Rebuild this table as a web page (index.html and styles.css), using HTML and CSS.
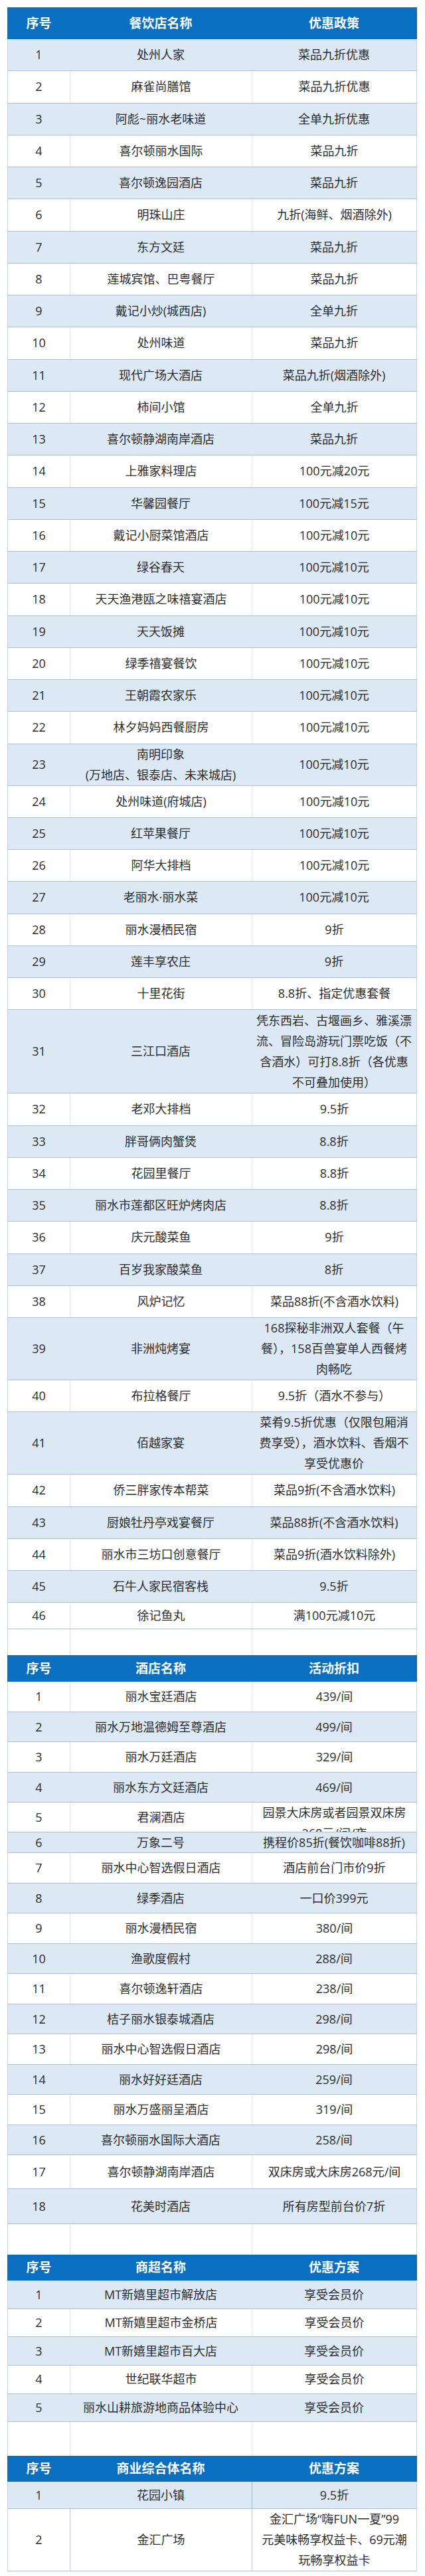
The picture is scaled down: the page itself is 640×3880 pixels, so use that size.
FILE: index.html
```html
<!DOCTYPE html>
<html lang="zh-CN">
<head>
<meta charset="utf-8">
<title>优惠商家名单</title>
<link rel="stylesheet" href="styles.css">
</head>
<body>
<div class="sheet">
  <section class="tbl food">
    <div class="row head"><div class="cell">序号</div><div class="cell">餐饮店名称</div><div class="cell">优惠政策</div></div>
    <div class="row b"><div class="cell">1</div><div class="cell">处州人家</div><div class="cell">菜品九折优惠</div></div>
    <div class="row w"><div class="cell">2</div><div class="cell">麻雀尚膳馆</div><div class="cell">菜品九折优惠</div></div>
    <div class="row b"><div class="cell">3</div><div class="cell">阿彪~丽水老味道</div><div class="cell">全单九折优惠</div></div>
    <div class="row w"><div class="cell">4</div><div class="cell">喜尔顿丽水国际</div><div class="cell">菜品九折</div></div>
    <div class="row b"><div class="cell">5</div><div class="cell">喜尔顿逸园酒店</div><div class="cell">菜品九折</div></div>
    <div class="row w"><div class="cell">6</div><div class="cell">明珠山庄</div><div class="cell">九折(海鲜、烟酒除外)</div></div>
    <div class="row b"><div class="cell">7</div><div class="cell">东方文廷</div><div class="cell">菜品九折</div></div>
    <div class="row w"><div class="cell">8</div><div class="cell">莲城宾馆、巴粤餐厅</div><div class="cell">菜品九折</div></div>
    <div class="row b"><div class="cell">9</div><div class="cell">戴记小炒(城西店)</div><div class="cell">全单九折</div></div>
    <div class="row w"><div class="cell">10</div><div class="cell">处州味道</div><div class="cell">菜品九折</div></div>
    <div class="row b"><div class="cell">11</div><div class="cell">现代广场大酒店</div><div class="cell">菜品九折(烟酒除外)</div></div>
    <div class="row w"><div class="cell">12</div><div class="cell">柿间小馆</div><div class="cell">全单九折</div></div>
    <div class="row b"><div class="cell">13</div><div class="cell">喜尔顿静湖南岸酒店</div><div class="cell">菜品九折</div></div>
    <div class="row w"><div class="cell">14</div><div class="cell">上雅家料理店</div><div class="cell">100元减20元</div></div>
    <div class="row b"><div class="cell">15</div><div class="cell">华馨园餐厅</div><div class="cell">100元减15元</div></div>
    <div class="row w"><div class="cell">16</div><div class="cell">戴记小厨菜馆酒店</div><div class="cell">100元减10元</div></div>
    <div class="row b"><div class="cell">17</div><div class="cell">绿谷春天</div><div class="cell">100元减10元</div></div>
    <div class="row w"><div class="cell">18</div><div class="cell">天天渔港瓯之味禧宴酒店</div><div class="cell">100元减10元</div></div>
    <div class="row b"><div class="cell">19</div><div class="cell">天天饭摊</div><div class="cell">100元减10元</div></div>
    <div class="row w"><div class="cell">20</div><div class="cell">绿季禧宴餐饮</div><div class="cell">100元减10元</div></div>
    <div class="row b"><div class="cell">21</div><div class="cell">王朝霞农家乐</div><div class="cell">100元减10元</div></div>
    <div class="row w"><div class="cell">22</div><div class="cell">林夕妈妈西餐厨房</div><div class="cell">100元减10元</div></div>
    <div class="row b lines2"><div class="cell">23</div><div class="cell"><span class="txt">南明印象</span><span class="txt">(万地店、银泰店、未来城店)</span></div><div class="cell">100元减10元</div></div>
    <div class="row w"><div class="cell">24</div><div class="cell">处州味道(府城店)</div><div class="cell">100元减10元</div></div>
    <div class="row b"><div class="cell">25</div><div class="cell">红苹果餐厅</div><div class="cell">100元减10元</div></div>
    <div class="row w"><div class="cell">26</div><div class="cell">阿华大排档</div><div class="cell">100元减10元</div></div>
    <div class="row b"><div class="cell">27</div><div class="cell">老丽水·丽水菜</div><div class="cell">100元减10元</div></div>
    <div class="row w"><div class="cell">28</div><div class="cell">丽水漫栖民宿</div><div class="cell">9折</div></div>
    <div class="row b"><div class="cell">29</div><div class="cell">莲丰享农庄</div><div class="cell">9折</div></div>
    <div class="row w"><div class="cell">30</div><div class="cell">十里花街</div><div class="cell">8.8折、指定优惠套餐</div></div>
    <div class="row b lines4"><div class="cell">31</div><div class="cell">三江口酒店</div><div class="cell"><span class="txt">凭东西岩、古堰画乡、雅溪漂</span><span class="txt">流、冒险岛游玩门票吃饭（不</span><span class="txt">含酒水）可打8.8折（各优惠</span><span class="txt">不可叠加使用）</span></div></div>
    <div class="row w"><div class="cell">32</div><div class="cell">老邓大排档</div><div class="cell">9.5折</div></div>
    <div class="row b"><div class="cell">33</div><div class="cell">胖哥俩肉蟹煲</div><div class="cell">8.8折</div></div>
    <div class="row w"><div class="cell">34</div><div class="cell">花园里餐厅</div><div class="cell">8.8折</div></div>
    <div class="row b"><div class="cell">35</div><div class="cell">丽水市莲都区旺炉烤肉店</div><div class="cell">8.8折</div></div>
    <div class="row w"><div class="cell">36</div><div class="cell">庆元酸菜鱼</div><div class="cell">9折</div></div>
    <div class="row b"><div class="cell">37</div><div class="cell">百岁我家酸菜鱼</div><div class="cell">8折</div></div>
    <div class="row w"><div class="cell">38</div><div class="cell">风炉记忆</div><div class="cell">菜品88折(不含酒水饮料)</div></div>
    <div class="row b lines3"><div class="cell">39</div><div class="cell">非洲炖烤宴</div><div class="cell"><span class="txt">168探秘非洲双人套餐（午</span><span class="txt">餐），158百兽宴单人西餐烤</span><span class="txt">肉畅吃</span></div></div>
    <div class="row w"><div class="cell">40</div><div class="cell">布拉格餐厅</div><div class="cell">9.5折（酒水不参与）</div></div>
    <div class="row b lines3"><div class="cell">41</div><div class="cell">佰越家宴</div><div class="cell"><span class="txt">菜肴9.5折优惠（仅限包厢消</span><span class="txt">费享受），酒水饮料、香烟不</span><span class="txt">享受优惠价</span></div></div>
    <div class="row w"><div class="cell">42</div><div class="cell">侨三胖家传本帮菜</div><div class="cell">菜品9折(不含酒水饮料)</div></div>
    <div class="row b"><div class="cell">43</div><div class="cell">厨娘牡丹亭戏宴餐厅</div><div class="cell">菜品88折(不含酒水饮料)</div></div>
    <div class="row w"><div class="cell">44</div><div class="cell">丽水市三坊口创意餐厅</div><div class="cell">菜品9折(酒水饮料除外)</div></div>
    <div class="row b"><div class="cell">45</div><div class="cell">石牛人家民宿客栈</div><div class="cell">9.5折</div></div>
    <div class="row w last-short"><div class="cell">46</div><div class="cell">徐记鱼丸</div><div class="cell">满100元减10元</div></div>
  </section>

  <div class="row w spacer gap-a"><div class="cell"></div><div class="cell"></div><div class="cell"></div></div>

  <section class="tbl hotel">
    <div class="row head"><div class="cell">序号</div><div class="cell">酒店名称</div><div class="cell">活动折扣</div></div>
    <div class="row w"><div class="cell">1</div><div class="cell">丽水宝廷酒店</div><div class="cell">439/间</div></div>
    <div class="row b"><div class="cell">2</div><div class="cell">丽水万地温德姆至尊酒店</div><div class="cell">499/间</div></div>
    <div class="row w"><div class="cell">3</div><div class="cell">丽水万廷酒店</div><div class="cell">329/间</div></div>
    <div class="row b"><div class="cell">4</div><div class="cell">丽水东方文廷酒店</div><div class="cell">469/间</div></div>
    <div class="row w row-clip"><div class="cell">5</div><div class="cell">君澜酒店</div><div class="cell clip"><span class="txt">园景大床房或者园景双床房</span><span class="txt">268元/间/夜</span></div></div>
    <div class="row b row-thin"><div class="cell">6</div><div class="cell">万象二号</div><div class="cell">携程价85折(餐饮咖啡88折)</div></div>
    <div class="row w"><div class="cell">7</div><div class="cell">丽水中心智选假日酒店</div><div class="cell">酒店前台门市价9折</div></div>
    <div class="row b"><div class="cell">8</div><div class="cell">绿季酒店</div><div class="cell">一口价399元</div></div>
    <div class="row w"><div class="cell">9</div><div class="cell">丽水漫栖民宿</div><div class="cell">380/间</div></div>
    <div class="row b"><div class="cell">10</div><div class="cell">渔歌度假村</div><div class="cell">288/间</div></div>
    <div class="row w"><div class="cell">11</div><div class="cell">喜尔顿逸轩酒店</div><div class="cell">238/间</div></div>
    <div class="row b"><div class="cell">12</div><div class="cell">桔子丽水银泰城酒店</div><div class="cell">298/间</div></div>
    <div class="row w"><div class="cell">13</div><div class="cell">丽水中心智选假日酒店</div><div class="cell">298/间</div></div>
    <div class="row b"><div class="cell">14</div><div class="cell">丽水好好廷酒店</div><div class="cell">259/间</div></div>
    <div class="row w"><div class="cell">15</div><div class="cell">丽水万盛丽呈酒店</div><div class="cell">319/间</div></div>
    <div class="row b"><div class="cell">16</div><div class="cell">喜尔顿丽水国际大酒店</div><div class="cell">258/间</div></div>
    <div class="row w row-51"><div class="cell">17</div><div class="cell">喜尔顿静湖南岸酒店</div><div class="cell">双床房或大床房268元/间</div></div>
    <div class="row b row-53"><div class="cell">18</div><div class="cell">花美时酒店</div><div class="cell">所有房型前台价7折</div></div>
  </section>

  <div class="row w spacer gap-b"><div class="cell"></div><div class="cell"></div><div class="cell"></div></div>

  <section class="tbl market">
    <div class="row head"><div class="cell">序号</div><div class="cell">商超名称</div><div class="cell">优惠方案</div></div>
    <div class="row b"><div class="cell">1</div><div class="cell">MT新嬉里超市解放店</div><div class="cell">享受会员价</div></div>
    <div class="row w"><div class="cell">2</div><div class="cell">MT新嬉里超市金桥店</div><div class="cell">享受会员价</div></div>
    <div class="row b"><div class="cell">3</div><div class="cell">MT新嬉里超市百大店</div><div class="cell">享受会员价</div></div>
    <div class="row w"><div class="cell">4</div><div class="cell">世纪联华超市</div><div class="cell">享受会员价</div></div>
    <div class="row b"><div class="cell">5</div><div class="cell">丽水山耕旅游地商品体验中心</div><div class="cell">享受会员价</div></div>
  </section>

  <div class="row w spacer gap-c"><div class="cell"></div><div class="cell"></div><div class="cell"></div></div>

  <section class="tbl mall">
    <div class="row head"><div class="cell">序号</div><div class="cell">商业综合体名称</div><div class="cell">优惠方案</div></div>
    <div class="row b divided"><div class="cell">1</div><div class="cell">花园小镇</div><div class="cell">9.5折</div></div>
    <div class="row w strong-lines lines3"><div class="cell">2</div><div class="cell">金汇广场</div><div class="cell"><span class="txt">金汇广场“嗨FUN一夏”99</span><span class="txt">元美味畅享权益卡、69元潮</span><span class="txt">玩畅享权益卡</span></div></div>
  </section>
</div>
</body>
</html>
```
FILE: styles.css
```css
html, body {
  margin: 0;
  padding: 0;
  background: #ffffff;
}

body {
  font-family: "Open Sans", "Noto Sans CJK SC", sans-serif;
  font-size: 18px;
  color: #2d2d2d;
}

.sheet {
  width: 617px;
  margin: 11px 0 0 11px;
}

.row {
  display: grid;
  grid-template-columns: 93px 274px 1fr;
  box-sizing: border-box;
  border-left: 1px solid #c2d3e3;
  border-right: 1px solid #c2d3e3;
  border-bottom: 1px solid #a9c1d8;
}

.cell {
  display: flex;
  flex-direction: column;
  align-items: center;
  justify-content: center;
  text-align: center;
  line-height: 31px;
  white-space: nowrap;
  box-sizing: border-box;
  min-width: 0;
}

.txt {
  display: block;
}

.row.b {
  background: #dce8f4;
}

.row.w {
  background: #ffffff;
}

.row.w .cell + .cell {
  border-left: 1px solid #e4e6e8;
}

.row.head {
  background: #0a6fc1;
  color: #ffffff;
  font-weight: bold;
  font-size: 19px;
  border-color: #0a6fc1;
  border-bottom: none;
}

/* food table */
.food .row { min-height: 48.25px; }
.food .row.head { height: 48px; min-height: 0; }
.food .row.lines2 { min-height: 62px; }
.food .row.lines3 { min-height: 94px; }
.food .row.lines4 { min-height: 126px; }
.food .row.last-short { min-height: 0; height: 40px; }

/* spacers */
.spacer { border-bottom: none; }
.gap-a { height: 39px; }
.gap-b { height: 46px; }
.gap-c { height: 51px; }

/* hotel table */
.hotel .row { min-height: 45.5px; }
.hotel .row.head { height: 40px; min-height: 0; }
.hotel .row.row-clip { height: 45px; min-height: 0; }
.hotel .cell.clip { justify-content: flex-start; overflow: hidden; }
.hotel .row.row-thin { height: 31px; min-height: 0; }
.hotel .row.row-51 { min-height: 51px; }
.hotel .row.row-53 { min-height: 53px; }

/* market table */
.market .row { min-height: 42.6px; }
.market .row.head { height: 39px; min-height: 0; }

/* mall table */
.mall .row { min-height: 41px; }
.mall .row.head { height: 39px; min-height: 0; }
.mall .row.lines3 { min-height: 93px; }
.mall .row.divided .cell:last-child { border-left: 1px solid #9db6cf; }
.mall .row.strong-lines .cell + .cell { border-left-color: #c9c9c9; }
```
